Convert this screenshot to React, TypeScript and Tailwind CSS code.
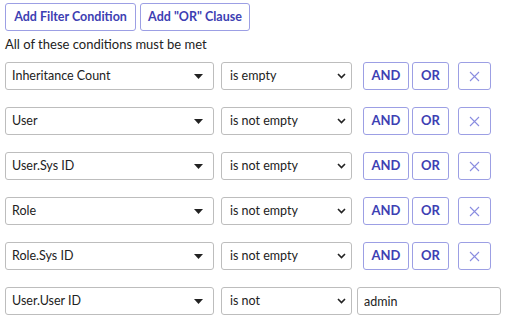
import { ReactNode } from 'react'

interface Condition {
  field: string
  operator: string
  value?: string
}

const conditions: Condition[] = [
  { field: 'Inheritance Count', operator: 'is empty' },
  { field: 'User', operator: 'is not empty' },
  { field: 'User.Sys ID', operator: 'is not empty' },
  { field: 'Role', operator: 'is not empty' },
  { field: 'Role.Sys ID', operator: 'is not empty' },
  { field: 'User.User ID', operator: 'is not', value: 'admin' },
]

function OutlineButton({ children, className }: { children: ReactNode; className?: string }) {
  return (
    <button
      type="button"
      className={`h-[28px] rounded-[3px] border border-[#9c9fe4] bg-white flex items-center justify-center text-[#3d40b3] ${className ?? ''}`}
    >
      {children}
    </button>
  )
}

function FieldSelect({ label }: { label: string }) {
  return (
    <div className="w-[209px] h-[28px] shrink-0 rounded-[3px] border border-[#bdbdbd] bg-white flex items-center justify-between pl-[6px] pr-[10px] text-[12.5px] text-[#222]">
      <span>{label}</span>
      <svg width="9" height="5" viewBox="0 0 9 5">
        <path d="M0 0 L9 0 L4.5 5 Z" fill="#222" />
      </svg>
    </div>
  )
}

function OperatorSelect({ label }: { label: string }) {
  return (
    <div className="w-[131px] h-[28px] shrink-0 rounded-[3px] border border-[#bdbdbd] bg-white flex items-center justify-between pl-[8px] pr-[5px] text-[12.5px] text-[#222]">
      <span>{label}</span>
      <svg width="9" height="6" viewBox="0 0 9 6">
        <path d="M1 1 L4.5 4.5 L8 1" fill="none" stroke="#222" strokeWidth="1.6" />
      </svg>
    </div>
  )
}

export default function App() {
  return (
    <div className="w-[505px] h-[318px] bg-white px-[5px] pt-[3px] font-['Lato','Liberation_Sans',sans-serif] text-[#222]">
      <div className="flex gap-[4px]">
        <OutlineButton className="w-[131px] text-[12.5px] font-bold">Add Filter Condition</OutlineButton>
        <OutlineButton className="w-[110px] text-[12.5px] font-bold">Add "OR" Clause</OutlineButton>
      </div>
      <p className="text-[13px] leading-[20px] mt-[3px]">All of these conditions must be met</p>
      <div className="flex flex-col gap-[17px] mt-[8px]">
        {conditions.map((c) => (
          <div key={c.field} className="flex items-center">
            <FieldSelect label={c.field} />
            <div className="ml-[7px]">
              <OperatorSelect label={c.operator} />
            </div>
            {c.value ? (
              <input
                type="text"
                defaultValue={c.value}
                className="ml-[5px] w-[144px] h-[28px] rounded-[3px] border border-[#bdbdbd] px-[6px] text-[12.5px] text-[#222] outline-none"
              />
            ) : (
              <div className="flex items-center ml-[11px]">
                <OutlineButton className="w-[46px] text-[13px] font-bold">AND</OutlineButton>
                <OutlineButton className="w-[37px] ml-[3px] text-[13px] font-bold">OR</OutlineButton>
                <OutlineButton className="w-[33px] ml-[9px]">
                  <svg width="11" height="11" viewBox="0 0 11 11">
                    <path d="M1 1 L10 10 M10 1 L1 10" stroke="#8a8de0" strokeWidth="1.1" />
                  </svg>
                </OutlineButton>
              </div>
            )}
          </div>
        ))}
      </div>
    </div>
  )
}
